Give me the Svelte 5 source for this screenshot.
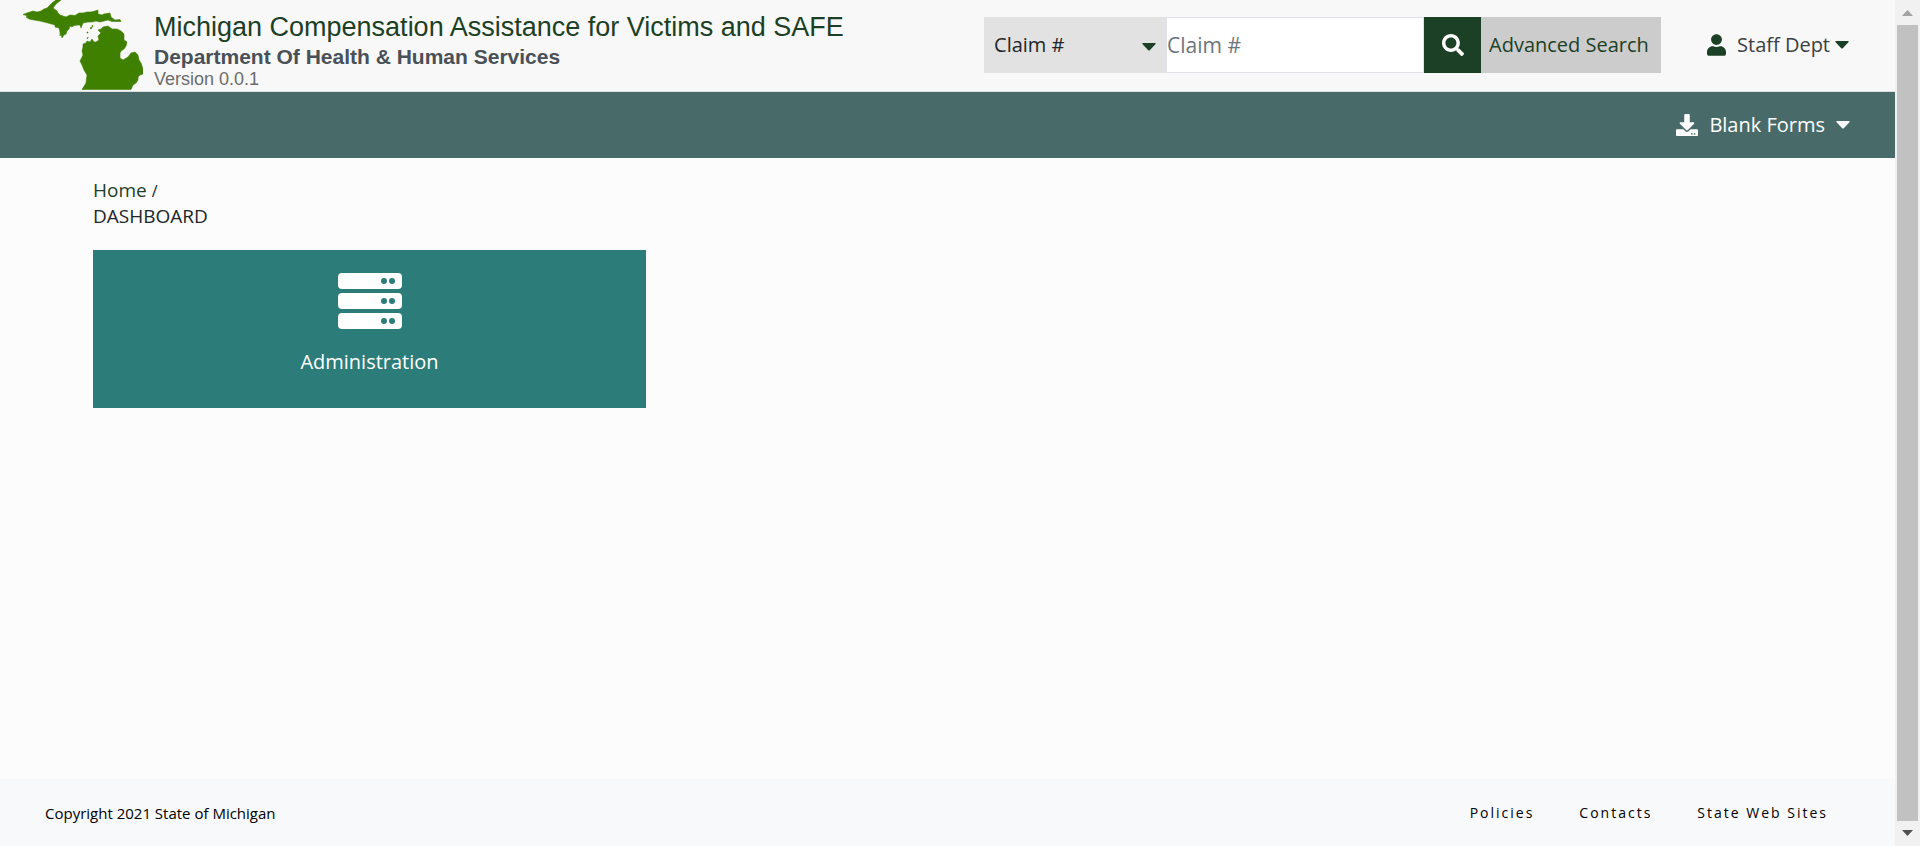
<script>
  const kinds = ['Claim #', 'Claimant', 'Victim'];
  const links = ['Policies', 'Contacts', 'State Web Sites'];
  let kind = $state(kinds[0]);
  let term = $state('');
</script>

<div class="frame">
  <div class="page">
    <header>
      <a class="brand" href="#home" aria-label="Michigan">
        <svg class="state" viewBox="23 0 120 90" width="120" height="90" aria-hidden="true">
          <g fill="#3f8000" stroke="#3f8000" stroke-width="0.6" stroke-linejoin="round">
            <path d="M23 14.500 27 13 33 11 37 12 41 11 44 9 47 8 50 5 52 3 56 0H61L56 4 53 8 57 11 58 13 60 15 66 17 70 15 75 15.500 79 13 83 13 87 12 91 12 95 11 98 10V14L102 15 104 14 110 13 111 17 115 20 120 19.500 121 21.500 112 21.500 108 20 104 21 100 22 96 21 92 22 88 22 83 23 81 28 80 25 78 25 74 25.500 72 27 70 26 69 29 67 31 66 34 64 35 62 38 61 34 60 36 60 32 59 28 55 27 55 25 48 23 40 21 34 20 29 19 26 17 28 16Z"/>
            <path d="M98 30 101 29 103 27 108 26 112 29 117 29 121 31 124 34 124 40 127 42 126 46 124 49 121 51 120 53 120 58 123 60 128 57 131 53 135 52 138 55 139 60 141 63 143 69 143 74 140 75 138 77 138 80 136 83 133 85 131 89.500H82L86 83 87 75 84 70 82 65 80 61 83 55 82 51 83 47 83 44 86 43 87 41 90 42 92 39 94 42 96 42 99 40 98 36 101 33Z"/>
            <path d="M87 32h1v1h-1zM90 28l2-1v1l-1 1zM92 25.500h1v1h-1zM87 39l1-2v1z"/>
          </g>
        </svg>
      </a>
      <div class="titles">
        <h1>Michigan Compensation Assistance for Victims and SAFE</h1>
        <h2>Department Of Health &amp; Human Services</h2>
        <p>Version 0.0.1</p>
      </div>
      <form class="search" onsubmit={(e) => e.preventDefault()}>
        <div class="kind">
          <select aria-label="Search by" bind:value={kind}>
            {#each kinds as k}<option>{k}</option>{/each}
          </select>
          <svg class="caret dark" viewBox="0 0 14 8" width="14" height="8" aria-hidden="true"><path d="M1 0h12q1 0 .6 1L8 7q-1 1-2 0L.4 1Q0 0 1 0Z"/></svg>
        </div>
        <input type="text" aria-label="Claim number" placeholder="Claim #" bind:value={term} />
        <button class="go" aria-label="Search">
          <svg viewBox="0 0 512 512" width="22" height="22" aria-hidden="true"><path fill="#fff" d="M505 442.700 405.300 343c-4.500-4.500-10.600-7-17-7H372c27.600-35.300 44-79.700 44-128C416 93.100 322.900 0 208 0S0 93.100 0 208s93.100 208 208 208c48.300 0 92.700-16.400 128-44v16.300c0 6.400 2.500 12.500 7 17l99.700 99.700c9.400 9.400 24.600 9.400 33.900 0l28.300-28.300c9.400-9.400 9.400-24.600.1-34zM208 336c-70.700 0-128-57.200-128-128 0-70.700 57.200-128 128-128 70.700 0 128 57.200 128 128 0 70.700-57.200 128-128 128z"/></svg>
        </button>
        <button class="advanced" type="button">Advanced Search</button>
      </form>
      <button class="menu user">
        <svg viewBox="0 0 448 512" width="19" height="22" aria-hidden="true"><path fill="#1c4025" d="M224 256c70.700 0 128-57.300 128-128S294.700 0 224 0 96 57.300 96 128s57.300 128 128 128zm89.600 32h-16.700c-22.200 10.200-46.900 16-72.900 16s-50.600-5.800-72.900-16h-16.700C60.200 288 0 348.200 0 422.400V464c0 26.500 21.500 48 48 48h352c26.500 0 48-21.500 48-48v-41.600c0-74.200-60.200-134.400-134.400-134.400z"/></svg>
        <span>Staff Dept</span>
        <svg class="caret dark" viewBox="0 0 14 8" width="14" height="8" aria-hidden="true"><path d="M1 0h12q1 0 .6 1L8 7q-1 1-2 0L.4 1Q0 0 1 0Z"/></svg>
      </button>
    </header>

    <nav class="bar" aria-label="Main">
      <button class="menu forms">
        <svg viewBox="0 0 512 512" width="22" height="22" aria-hidden="true"><path fill="#fff" d="M216 0h80c13.300 0 24 10.700 24 24v168h87.700c17.800 0 26.700 21.500 14.100 34.100L269.700 378.300c-7.500 7.500-19.800 7.500-27.300 0L90.100 226.100c-12.600-12.600-3.700-34.100 14.100-34.100H192V24c0-13.300 10.700-24 24-24zm296 376v112c0 13.300-10.700 24-24 24H24c-13.300 0-24-10.700-24-24V376c0-13.300 10.700-24 24-24h146.700l49 49c20.100 20.100 52.500 20.100 72.600 0l49-49H488c13.300 0 24 10.700 24 24zm-124 88c0-11-9-20-20-20s-20 9-20 20 9 20 20 20 20-9 20-20zm64 0c0-11-9-20-20-20s-20 9-20 20 9 20 20 20 20-9 20-20z"/></svg>
        <span>Blank Forms</span>
        <svg class="caret" viewBox="0 0 14 8" width="14" height="8" aria-hidden="true"><path d="M1 0h12q1 0 .6 1L8 7q-1 1-2 0L.4 1Q0 0 1 0Z"/></svg>
      </button>
    </nav>

    <main>
      <div class="crumbs">
        <div><a href="#home">Home</a> <span>/</span></div>
        <div>DASHBOARD</div>
      </div>
      <div class="tiles">
        <a class="tile" href="#administration">
          <svg viewBox="0 0 64 56" width="64" height="56" aria-hidden="true">
            {#each [0, 20, 40] as y}
              <rect x="0" {y} width="64" height="16" rx="4" fill="#fff"/>
              <circle cx="46" cy={y + 8} r="3" fill="#2c7c79"/>
              <circle cx="54" cy={y + 8} r="3" fill="#2c7c79"/>
            {/each}
          </svg>
          <span>Administration</span>
        </a>
      </div>
    </main>

    <footer>
      <span>Copyright 2021 State of Michigan</span>
      <ul>
        {#each links as l}<li><a href="#top">{l}</a></li>{/each}
      </ul>
    </footer>
  </div>

  <div class="scroll" aria-hidden="true">
    <svg viewBox="0 0 11 6" width="11" height="6"><path fill="#a3a3a3" d="M0 6 5.500 0 11 6Z"/></svg>
    <div class="thumb"></div>
    <svg viewBox="0 0 11 6" width="11" height="6"><path fill="#505050" d="M0 0 5.500 6 11 0Z"/></svg>
  </div>
</div>

<style>
  :global(body) { margin: 0; }
  .frame {
    display: flex;
    min-height: 100vh;
    font-family: "Open Sans", "Noto Sans", sans-serif;
    font-size: 20px;
    line-height: 26px;
    color: #212529;
    background: #fcfcfc;
  }
  .page { flex: 1; min-width: 0; display: flex; flex-direction: column; }
  button, select, input { font: inherit; color: inherit; border: 0; margin: 0; padding: 0; border-radius: 0; box-sizing: border-box; }
  button { cursor: pointer; background: none; }
  a { color: inherit; text-decoration: none; }
  svg { display: block; flex: none; }

  header {
    display: flex;
    align-items: flex-start;
    height: 91px;
    padding: 0 46px 0 23px;
    background: #f8f8f8;
    border-bottom: 1px solid #dcdfe2;
  }
  .titles { margin: 0 auto 0 11px; padding-top: 11px; font-family: "Liberation Sans", Arial, sans-serif; white-space: nowrap; }
  h1, h2, p { margin: 0; font-weight: 400; }
  h1 { font-size: 27px; line-height: 32px; color: #1c4025; }
  h2 { font-size: 21px; line-height: 28px; font-weight: 700; color: #495057; }
  p { font-size: 18px; line-height: 16px; color: #6c6c6c; }

  .search { display: flex; height: 56px; margin-top: 17px; }
  .kind { position: relative; display: flex; }
  select { width: 182px; padding: 0 10px; appearance: none; background: #e2e2e2; outline: 0; }
  .kind .caret { position: absolute; right: 10px; top: 26px; pointer-events: none; }
  .caret { fill: #fff; }
  .caret.dark { fill: #1c4025; }
  input { width: 258px; border: 1px solid #dee2e6; background: #fff; outline: 0; font-size: 21px; }
  input::placeholder { color: #6c757d; opacity: 1; }
  .go { width: 57px; display: grid; place-items: center; background: #1c4025; }
  .advanced { width: 180px; padding: 0 8px; text-align: left; background: #ccc; color: #1c4025; white-space: nowrap; }
  .menu { display: flex; align-items: center; white-space: nowrap; }
  .menu span { margin-left: 11px; }
  .user { height: 56px; margin: 17px 0 0 46px; color: #3c4043; }
  .user .caret { margin-left: 5px; }
  .forms .caret { margin-left: 11px; }

  .bar { display: flex; justify-content: flex-end; height: 66px; padding: 0 45px; background: #486b69; color: #fff; }

  main { flex: 1; padding: 20px 93px; }
  .crumbs { font-size: 19px; line-height: 25px; }
  .crumbs a { color: #1c4025; }
  .crumbs span { font-size: 16px; }
  .tiles { display: grid; grid-template-columns: repeat(3, 1fr); gap: 25px; margin-top: 21px; }
  .tile {
    display: flex;
    flex-direction: column;
    align-items: center;
    gap: 20px;
    padding: 23px 0 33px;
    color: #fff;
    background: #2c7c79;
  }

  footer {
    display: flex;
    align-items: center;
    justify-content: space-between;
    height: 67px;
    padding: 0 67px 0 45px;
    font-size: 15px;
    color: #000;
    background: #f8f9fb;
  }
  ul { display: flex; gap: 45px; margin: 0; padding: 0; list-style: none; font-size: 14px; letter-spacing: 2px; }

  .scroll {
    display: flex;
    flex-direction: column;
    align-items: center;
    gap: 9px;
    width: 25px;
    padding: 10px 0;
    box-sizing: border-box;
    background: #f1f1f1;
  }
  .thumb { flex: 1; width: 21px; background: #c1c1c1; }
</style>
